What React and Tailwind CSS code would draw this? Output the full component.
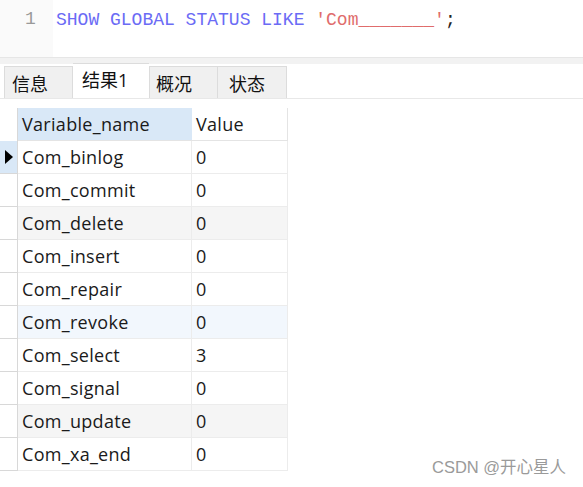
import React from "react";

const rows = [
  ["Com_binlog", "0", "white", true],
  ["Com_commit", "0", "white"],
  ["Com_delete", "0", "gray"],
  ["Com_insert", "0", "white"],
  ["Com_repair", "0", "white"],
  ["Com_revoke", "0", "blue"],
  ["Com_select", "3", "white"],
  ["Com_signal", "0", "white"],
  ["Com_update", "0", "gray"],
  ["Com_xa_end", "0", "white"],
];

const bgMap = { white: "bg-white", gray: "bg-[#f5f5f5]", blue: "bg-[#f2f7fd]" };

const font = { fontFamily: '"Open Sans", "Noto Sans CJK SC", sans-serif' };

export default function App() {
  return (
    <div className="w-[583px] h-[487px] bg-white relative overflow-hidden" style={font}>
      {/* editor */}
      <div className="flex h-[58px] border-b border-[#e6e6e6]">
        <div className="w-[53px] bg-[#fafafa] flex justify-center pt-[6px] pl-[8px]">
          <span className="text-[18px] leading-[26px] text-[#999999] font-['Liberation_Mono',monospace]">1</span>
        </div>
        <div className="pt-[7px] pl-[3px] font-['Liberation_Mono',monospace] text-[18px] leading-[26px] whitespace-pre">
          <span className="text-[#6b6bf5]">SHOW GLOBAL STATUS LIKE </span>
          <span className="text-[#e06c6c]">'Com_______'</span>
          <span className="text-[#222]">;</span>
        </div>
      </div>
      <div className="h-[6px] bg-[#f2f2f2]" />
      {/* tabs */}
      <div className="flex items-end h-[35px] pl-[4px] border-b border-[#e8e8e8] text-[18px] text-[#111]">
        <div className="w-[69px] h-[32px] bg-[#f0f0f0] border border-b-0 border-[#dcdcdc] pl-[7px] leading-[34px]">信息</div>
        <div className="w-[76px] h-[35px] bg-white border-t border-[#dcdcdc] pl-[9px] leading-[32px]">结果1</div>
        <div className="w-[69px] h-[32px] bg-[#f0f0f0] border border-b-0 border-[#dcdcdc] pl-[6px] leading-[34px]">概况</div>
        <div className="w-[69px] h-[32px] bg-[#f0f0f0] border border-b-0 border-l-0 border-[#dcdcdc] pl-[11px] leading-[34px]">状态</div>
      </div>
      {/* table */}
      <div className="pt-[9px] w-[288px] text-[18px] tracking-[0.3px] text-[#1a1a1a]">
        <div className="flex h-[33px]">
          <div className="w-[18px] bg-white border-r border-[#d8d8d8]" />
          <div className="w-[174px] bg-[#d9e8f7] border-b border-[#e4e4e4] pl-[4px] leading-[33px]">Variable_name</div>
          <div className="w-[96px] bg-white border-b border-r border-[#e4e4e4] pl-[4px] leading-[33px]">Value</div>
        </div>
        {rows.map(([name, val, bg, cur]) => (
          <div key={name} className={`flex h-[33px] ${bgMap[bg]}`}>
            <div className={`w-[18px] border-r border-b border-[#d8d8d8] flex items-center ${cur ? "bg-[#d9e8f7]" : "bg-white"}`}>
              {cur && (
                <svg width="10" height="16" viewBox="0 0 10 16" className="ml-[4px]">
                  <polygon points="1,1 9,8 1,15" fill="#000" />
                </svg>
              )}
            </div>
            <div className="w-[174px] border-b border-r border-[#ececec] pl-[4px] leading-[32px]">{name}</div>
            <div className="w-[96px] border-b border-r border-[#ececec] pl-[4px] leading-[32px]">{val}</div>
          </div>
        ))}
      </div>
      <div className="absolute left-[432px] top-[455px] text-[16.5px] text-[#9a9a9a] font-['Liberation_Sans','Noto_Sans_CJK_SC',sans-serif]">
        CSDN @开心星人
      </div>
    </div>
  );
}
